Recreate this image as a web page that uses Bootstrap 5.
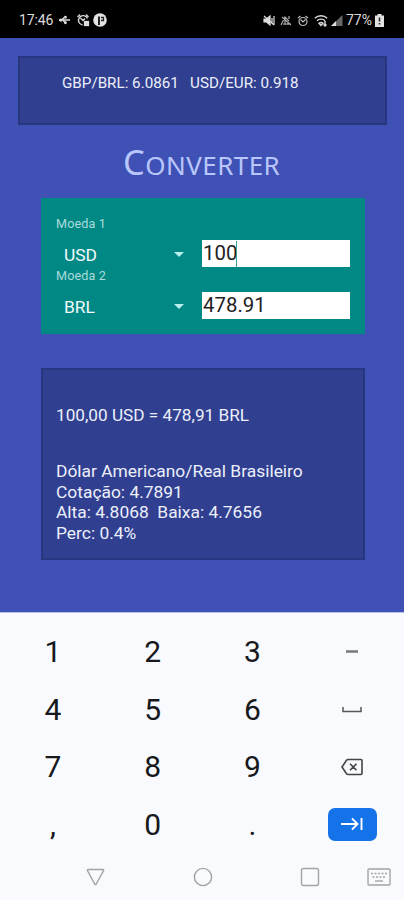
<!DOCTYPE html>
<html lang="pt-BR">
<head>
<meta charset="utf-8">
<meta name="viewport" content="width=device-width, initial-scale=1">
<title>Converter</title>
<link rel="stylesheet" href="https://cdn.jsdelivr.net/npm/bootstrap@5.3.0/dist/css/bootstrap.min.css">
<style>
body{font-family:Roboto,"Liberation Sans",sans-serif;background:#3f51b5;height:900px;overflow:hidden}
svg{display:block;flex:none}
.status-strip{height:38px;background:#000;color:#dcdcdc;padding:2px 20px 0 19px;font-size:14px}
.clock{letter-spacing:-.15px}
.ic-gap{margin-left:5px}
.ic-tight{margin-left:3px}
.app-area{height:574px;padding-top:18px}
.panel-dark{background:#303f8f;border:2px solid #28367f;color:#eceffb}
.ticker{height:69px;margin:0 17px 0 18px;padding:15px 0 0 42px;font-size:15.2px;line-height:20px;white-space:pre}
.app-title{margin:16px 0 0 123px;height:41px;line-height:41px;font-family:"Noto Sans",sans-serif;font-weight:400;font-size:26px;text-transform:uppercase;color:#b9c6fb}
.title-text{display:inline-block;letter-spacing:.45px}
.title-text::first-letter{font-size:34.5px}
.form-panel{background:#008885;margin:16px 39px 0 41px;height:136px;padding:18px 15px 0}
.coin-label{font-size:12.6px;line-height:16px;height:16px;color:#a9dcda;letter-spacing:.15px}
.coin-row{height:36px;padding-top:7.5px}
.coin-name{width:146px;padding:2px 18px 0 8px;font-size:17.4px;color:#f1fbfb}
.amount{width:148px;height:27px;padding:1px 0 0 1px;font-size:20.4px;line-height:27px;color:#222;background:#fff}
.caret{width:1px;height:26px;margin-left:-1px;background:#38a596}
.result{margin:34px 39px 0 41px;height:192px;padding:35px 0 0 13px;font-size:17.2px;line-height:20.8px}
.detail{margin-top:35px;font-size:17.4px;white-space:pre}
.keyboard{height:288px;background:#f9fafd;padding:9.5px 2px 0 3px;border-top:1px solid #b9c1e4}
.key{height:57.7px;font-size:30px;color:#16181b}
.next-key{width:49px;height:33px;border-radius:7px;background:#1473e9}
.system-nav{height:46px;padding:1px 11px 0 81px}
.nav-gap{margin-left:87px}
</style>
<script src="https://cdn.jsdelivr.net/npm/bootstrap@5.3.0/dist/js/bootstrap.bundle.min.js"></script>
</head>
<body>
<header class="status-strip d-flex align-items-center">
  <span class="clock">17:46</span>
  <svg class="ic-gap" width="13" height="14" viewBox="0 0 14 14" fill="none" stroke="#ddd" stroke-width="1.5"><path d="M1 7h12M4 7l3-3M5 7l3 3"/><circle cx="3" cy="7" r="1" fill="#ddd"/><circle cx="8" cy="4" r=".8" fill="#ddd"/><circle cx="8" cy="10" r=".8" fill="#ddd"/></svg>
  <svg class="ic-gap" width="14" height="14" viewBox="0 0 14 14" fill="none" stroke="#ddd" stroke-width="1.300"><path d="M11.500 5.500A4.700 4.700 0 1 0 6.500 12M1.500 4l2.500-2.500M10 1.500L12.500 4M4.500 5L7 7.500l2-2"/><rect x="8.500" y="8.500" width="4" height="4" fill="#ddd"/></svg>
  <svg class="ic-tight" width="14" height="14" viewBox="0 0 14 14"><circle cx="7" cy="7" r="6.800" fill="#e4e4e4"/><path d="M6 12V3.500" fill="none" stroke="#222" stroke-width="2"/><path d="M8 4.500h2.500v3H8" fill="none" stroke="#222" stroke-width="1.300"/></svg>
  <svg class="ms-auto" width="12" height="13" viewBox="0 0 12 13" fill="none" stroke="#ddd" stroke-width="1.200"><path d="M1 5h2.500L7 2v9L3.500 8H1z" fill="#ddd"/><path d="M1 2l10 9M9 4v5M11 2v9"/></svg>
  <svg class="ic-gap" width="12" height="13" viewBox="0 0 12 13" fill="none" stroke="#aaa" stroke-width="1.200"><path d="M1 11l4-8 4 4M2 3l9 8M5 6v5M8 8v3M9 2v3M3 10h8"/></svg>
  <svg class="ic-gap" width="12" height="13" viewBox="0 0 12 13" fill="none" stroke="#bbb" stroke-width="1.200"><circle cx="6" cy="7.500" r="4"/><path d="M1 4l2.500-2M11 4L8.500 2M3.500 5.500L6 8l2.500-2.500"/></svg>
  <svg class="ic-gap" width="14" height="14" viewBox="0 0 14 14" fill="none" stroke="#ddd" stroke-width="1.400"><path d="M.8 5.200a9 9 0 0 1 12.400 0M3 7.800a5.700 5.700 0 0 1 8 0"/><path d="M5 10.300a3 3 0 0 1 4 0L7 12.500zM11 8v5M9.500 11.500L11 13l1.500-1.500"/></svg>
  <svg class="ic-tight" width="12" height="13" viewBox="0 0 12 13"><path d="M0 12L11.500 1v11z" fill="#666"/><path d="M0 12l5-5v5z" fill="#ddd"/></svg>
  <span class="ic-tight">77%</span>
  <svg class="ic-tight" width="9" height="13" viewBox="0 0 9 13"><path d="M2.500 0h4v1.500H9V13H0V1.500h2.500z" fill="#e2e2e2"/><path d="M4.500 3.500v4M4.500 9v1.500" stroke="#222" stroke-width="1.500"/></svg>
</header>
<main class="app-area">
  <section class="panel-dark ticker">GBP/BRL: 6.0861   USD/EUR: 0.918</section>
  <h1 class="app-title"><span class="title-text">Converter</span></h1>
  <form class="form-panel">
    <div class="coin-label">Moeda 1</div>
    <div class="coin-row d-flex align-items-start">
      <div class="coin-name d-flex align-items-center justify-content-between"><span>USD</span><svg width="10" height="5" viewBox="0 0 10 5"><path d="M0 0h10L5 5z" fill="#b8eeee"/></svg></div>
      <div class="amount d-flex align-items-center"><span>100</span><span class="caret"></span></div>
    </div>
    <div class="coin-label">Moeda 2</div>
    <div class="coin-row d-flex align-items-start">
      <div class="coin-name d-flex align-items-center justify-content-between"><span>BRL</span><svg width="10" height="5" viewBox="0 0 10 5"><path d="M0 0h10L5 5z" fill="#b8eeee"/></svg></div>
      <div class="amount d-flex align-items-center"><span>478.91</span></div>
    </div>
  </form>
  <section class="panel-dark result">
    <div>100,00 USD = 478,91 BRL</div>
    <div class="detail">Dólar Americano/Real Brasileiro
Cotação: 4.7891
Alta: 4.8068  Baixa: 4.7656
Perc: 0.4%</div>
  </section>
</main>
<footer class="keyboard">
  <div class="row row-cols-4 g-0 text-center">
    <div class="col key d-flex align-items-center justify-content-center">1</div>
    <div class="col key d-flex align-items-center justify-content-center">2</div>
    <div class="col key d-flex align-items-center justify-content-center">3</div>
    <div class="col key d-flex align-items-center justify-content-center"><svg width="12" height="3"><path d="M0 1.500h12" stroke="#777" stroke-width="2.500"/></svg></div>
    <div class="col key d-flex align-items-center justify-content-center">4</div>
    <div class="col key d-flex align-items-center justify-content-center">5</div>
    <div class="col key d-flex align-items-center justify-content-center">6</div>
    <div class="col key d-flex align-items-center justify-content-center"><svg width="20" height="7" fill="none" stroke="#555" stroke-width="1.500"><path d="M1 1v4.500h18V1"/></svg></div>
    <div class="col key d-flex align-items-center justify-content-center">7</div>
    <div class="col key d-flex align-items-center justify-content-center">8</div>
    <div class="col key d-flex align-items-center justify-content-center">9</div>
    <div class="col key d-flex align-items-center justify-content-center"><svg width="22" height="18" viewBox="0 0 22 18" fill="none" stroke="#444" stroke-width="1.600"><path d="M7 1.500h13a1 1 0 0 1 1 1v13a1 1 0 0 1-1 1H7q-1 0-1.500-.8L1 9l4.500-6.700Q6 1.500 7 1.500zM9 5.700l6.500 6.600M15.500 5.700L9 12.300"/></svg></div>
    <div class="col key d-flex align-items-center justify-content-center">,</div>
    <div class="col key d-flex align-items-center justify-content-center">0</div>
    <div class="col key d-flex align-items-center justify-content-center">.</div>
    <div class="col key d-flex align-items-center justify-content-center"><span class="next-key d-flex align-items-center justify-content-center"><svg width="22" height="14" viewBox="0 0 22 14" fill="none" stroke="#fff" stroke-width="1.900"><path d="M0 7h16M11 1.500L16.500 7 11 12.500M20.500 1v12"/></svg></span></div>
  </div>
  <nav class="system-nav d-flex align-items-center">
    <svg width="22" height="20" viewBox="0 0 22 20" fill="none" stroke="#a2a3a6" stroke-width="1.400"><path d="M4.200 2.500h14.600q1.300 0 .7 1.200L12.300 17q-.8 1.200-1.600 0L3.500 3.700Q2.900 2.500 4.200 2.500z"/></svg>
    <svg class="nav-gap" width="20" height="20" viewBox="0 0 20 20" fill="none" stroke="#a2a3a6" stroke-width="1.400"><circle cx="10" cy="10" r="8.600"/></svg>
    <svg class="nav-gap" width="20" height="20" viewBox="0 0 20 20" fill="none" stroke="#a2a3a6" stroke-width="1.400"><rect x="1.500" y="1.500" width="17" height="17" rx="2"/></svg>
    <svg class="ms-auto" width="24" height="20" viewBox="0 0 24 20" fill="none" stroke="#a2a3a6" stroke-width="1.400"><rect x="1" y="2" width="22" height="16" rx="1"/><path d="M4 6.500h16" stroke-dasharray="2 1.500"/><path d="M5.500 10h13" stroke-dasharray="2 1.500"/><path d="M8 14h8"/></svg>
  </nav>
</footer>
</body>
</html>
